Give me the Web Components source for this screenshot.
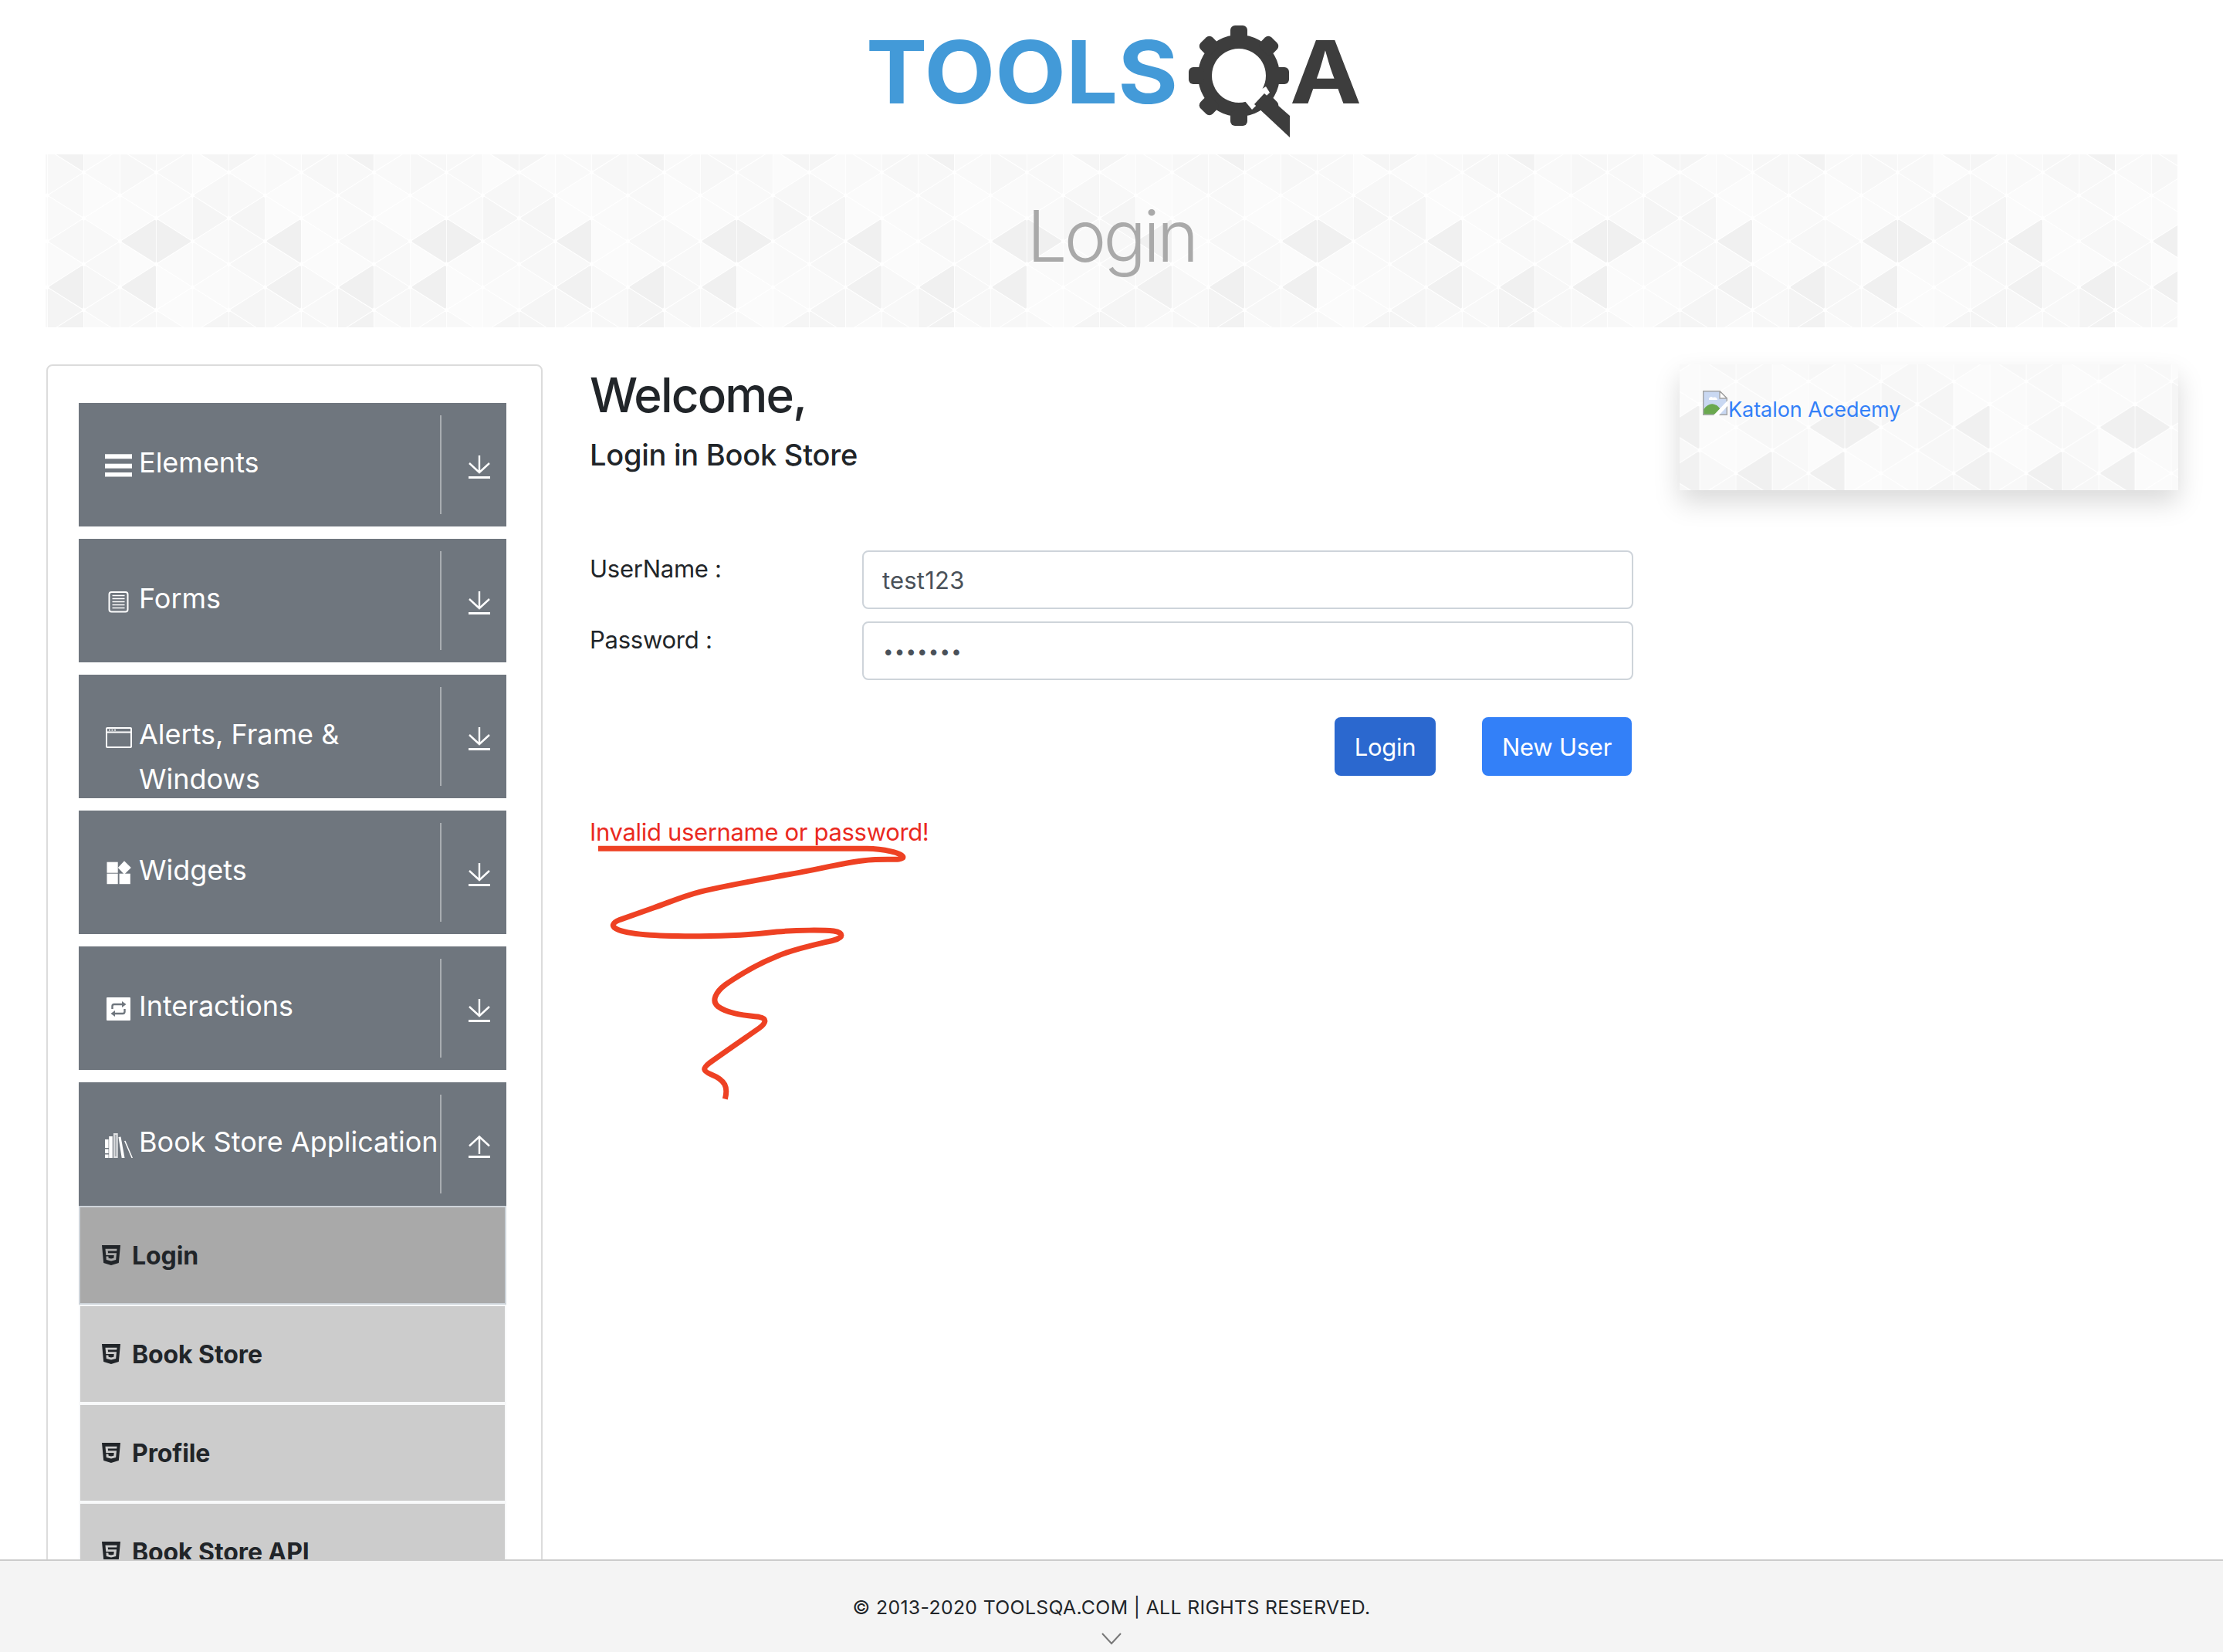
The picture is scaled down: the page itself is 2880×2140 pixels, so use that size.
<!DOCTYPE html>
<html lang="en">
<head>
<meta charset="UTF-8">
<title>ToolsQA</title>
<style>
  html, body { margin: 0; height: 2140px; overflow: hidden; background: #fff; }
  body { font-family: Inter, "Liberation Sans", sans-serif; color: #212529; }
  pattern-box.banner { margin: 0 59px; height: 224px; }
</style>
</head>
<body>
<site-logo></site-logo>
<pattern-box class="banner" shift-x="0" shift-y="0"><page-title>Login</page-title></pattern-box>
<page-columns>
  <side-menu slot="left">
    <menu-group label="Elements" icon="bars"></menu-group>
    <menu-group label="Forms" icon="doc"></menu-group>
    <menu-group label="Alerts, Frame &amp; Windows" icon="window"></menu-group>
    <menu-group label="Widgets" icon="widgets"></menu-group>
    <menu-group label="Interactions" icon="swap"></menu-group>
    <menu-group label="Book Store Application" icon="books" open></menu-group>
    <menu-item active>Login</menu-item>
    <menu-item>Book Store</menu-item>
    <menu-item>Profile</menu-item>
    <menu-item>Book Store API</menu-item>
  </side-menu>
  <login-form slot="center"></login-form>
  <ad-card slot="right"></ad-card>
</page-columns>
<site-footer></site-footer>

<script>
class SiteLogo extends HTMLElement {
  constructor() {
    super();
    this.attachShadow({ mode: 'open' }).innerHTML = `
      <style>
        :host { display: flex; justify-content: center; height: 200px; }
        svg { display: block; }
        text { font-family: Inter, "Liberation Sans", sans-serif; font-weight: 700; }
      </style>
      <svg width="680" height="200" viewBox="1100 0 680 200">
        <text x="1122" y="134" font-size="113" fill="#439ad8" textLength="404" lengthAdjust="spacingAndGlyphs">TOOLS</text>
        <g fill="#3d3d3d">
          <path fill-rule="evenodd" d="M1605 45a53 53 0 1 0 .01 0zM1605 63a35 35 0 1 1-.01 0z"/>
          <rect x="1594" y="33" width="22" height="20" rx="6"/>
          <rect x="1594" y="33" width="22" height="20" rx="6" transform="rotate(45 1605 98)"/>
          <rect x="1594" y="33" width="22" height="20" rx="6" transform="rotate(90 1605 98)"/>
          <rect x="1594" y="33" width="22" height="20" rx="6" transform="rotate(135 1605 98)"/>
          <rect x="1594" y="33" width="22" height="20" rx="6" transform="rotate(180 1605 98)"/>
          <rect x="1594" y="33" width="22" height="20" rx="6" transform="rotate(225 1605 98)"/>
          <rect x="1594" y="33" width="22" height="20" rx="6" transform="rotate(270 1605 98)"/>
          <rect x="1594" y="33" width="22" height="20" rx="6" transform="rotate(315 1605 98)"/>
        </g>
        <path d="M1612 130 L1640 112 L1645 120 L1622 142 Z" fill="#fff"/>
        <path d="M1671 150 L1671 178 L1625 135 L1638 121 Z" fill="#3d3d3d"/>
        <text x="1671" y="134" font-size="113" fill="#3d3d3d" textLength="93" lengthAdjust="spacingAndGlyphs">A</text>
      </svg>`;
  }
}

// triangle wallpaper used behind the title and the ad card
class PatternBox extends HTMLElement {
  constructor() {
    super();
    this.attachShadow({ mode: 'open' });
  }
  connectedCallback() {
    const dark = { 'e1:2:L': '#f0f0f0', 'e1:2:R': '#f0f0f0', 'e1:6:L': '#f0f0f0', 'e2:0:L': '#f0f0f0', 'e2:2:L': '#f0f0f0',
      'e2:6:L': '#f1f1f1', 'o0:3:R': '#f5f5f5', 'o0:5:L': '#f5f5f5', 'o2:7:R': '#f4f4f4', 'o2:5:L': '#f5f5f5',
      'e3:0:L': '#f2f2f2', 'e3:4:L': '#f5f5f5', 'e3:4:R': '#f5f5f5' };
    const soft = ['#f9f9f9', '#f8f8f8', '#fafafa', '#f7f7f7', '#fbfbfb'];
    const colX = k => 49.4 + 47 * k;
    let polys = '';
    for (let k = -1; k <= 8; k++) {
      const odd = ((k % 2) + 2) % 2 === 1;
      const top = odd ? 53 : 23.2;
      for (let n = -1; n <= 4; n++) {
        for (const dir of ['L', 'R']) {
          const y1 = top + 59.5 * n, y2 = y1 + 59.5, x = colX(k), ax = x + (dir === 'L' ? -47 : 47), ay = (y1 + y2) / 2;
          const mk = ((k % 8) + 8) % 8, mn = ((n % 4) + 4) % 4;
          const key = (odd ? 'o' : 'e') + mn + ':' + mk + ':' + dir;
          const fill = dark[key] || soft[(mk * 3 + mn * 7 + (dir === 'L' ? 1 : 4)) % soft.length];
          const cx = (x + x + ax) / 3, cy = (y1 + y2 + ay) / 3, s = 0.88;
          const p = [[x, y1], [x, y2], [ax, ay]].map(q => (cx + (q[0] - cx) * s).toFixed(1) + ',' + (cy + (q[1] - cy) * s).toFixed(1)).join(' ');
          polys += `<polygon points="${p}" fill="${fill}" stroke="${fill}" stroke-width="3" stroke-linejoin="round"/>`;
        }
      }
    }
    const sx = this.getAttribute('shift-x') || 0, sy = this.getAttribute('shift-y') || 0;
    this.shadowRoot.innerHTML = `
      <style>
        :host { display: block; position: relative; overflow: hidden; background: #fff; }
        svg { position: absolute; inset: 0; width: 100%; height: 100%; }
        .content { position: relative; }
      </style>
      <svg><defs><pattern id="tri" width="376" height="238" patternUnits="userSpaceOnUse" patternTransform="translate(${sx} ${sy})">${polys}</pattern></defs>
      <rect width="100%" height="100%" fill="url(#tri)"/></svg>
      <div class="content"><slot></slot></div>`;
  }
}

class PageTitle extends HTMLElement {
  constructor() {
    super();
    this.attachShadow({ mode: 'open' }).innerHTML = `
      <style>
        :host { display: block; text-align: center; height: 224px; }
        h1 { margin: 0; font-size: 92px; font-weight: 300; line-height: 212px; color: #a9a9a9; letter-spacing: -3.700px; }
      </style>
      <h1><slot></slot></h1>`;
  }
}

class PageColumns extends HTMLElement {
  constructor() {
    super();
    this.attachShadow({ mode: 'open' }).innerHTML = `
      <style>
        :host { display: grid; grid-template-columns: 643px 1352px 645px; column-gap: 61px; padding: 48px 59px 0 60px; align-items: start; }
        .right { margin-left: -1px; }
      </style>
      <div><slot name="left"></slot></div>
      <div><slot name="center"></slot></div>
      <div class="right"><slot name="right"></slot></div>`;
  }
}

class SideMenu extends HTMLElement {
  constructor() {
    super();
    this.attachShadow({ mode: 'open' }).innerHTML = `
      <style>
        :host { display: flex; flex-direction: column; box-sizing: border-box; height: 1668px; overflow: hidden; padding: 48px 45px 0 40px; border: 2px solid #dcdcdc; border-radius: 8px; }
        ::slotted(menu-group) { margin-bottom: 16px; }
        ::slotted(menu-group[open]) { margin-bottom: 0; }
      </style>
      <slot></slot>`;
  }
}

const MENU_ICONS = {
  bars: `<rect x="2" y="4.3" width="35" height="6"/><rect x="2" y="16.7" width="35" height="6"/><rect x="2" y="28" width="35" height="5.5"/>`,
  doc: `<rect x="7.5" y="7" width="24" height="25.5" rx="3" fill="none" stroke="#fff" stroke-width="2"/>
        <path d="M11.5 11.5h16M11.5 15.5h16M11.5 19.5h16M11.5 23.5h16M11.5 27.5h16" stroke="#fff" stroke-width="1.4"/>`,
  window: `<rect x="4" y="7" width="32" height="25" rx="1" fill="none" stroke="#fff" stroke-width="2"/>
        <path d="M4 12.5h32" stroke="#fff" stroke-width="2"/><path d="M7 9.8h2M10.5 9.8h2M14 9.8h2" stroke="#fff" stroke-width="1.6"/>`,
  widgets: `<rect x="4.5" y="4.7" width="14.2" height="14"/><rect x="4.5" y="19.7" width="14.2" height="13.5"/><rect x="20.6" y="19.7" width="14.2" height="13.5"/><path d="M27 3.2l8.8 8.8-8.8 8.8-8.2-8.8z"/>`,
  swap: `<rect x="4" y="4" width="31" height="30" rx="1"/>
        <g fill="none" stroke="#6f767e" stroke-width="2.4"><path d="M11.5 19v-3.5a2.5 2.5 0 0 1 2.5-2.5h11"/><path d="M27.5 19v3.5a2.5 2.5 0 0 1-2.5 2.5H14"/></g>
        <path d="M24 9l5.5 4-5.5 4zM15 21l-5.5 4 5.5 4z" fill="#6f767e"/>`,
  books: `<path d="M2 12h4.600v11H2zM2 24.500h4.600V30H2zM2 31.500h4.600V36H2z"/><path d="M7.200 8h4.600v28H7.200z"/>
        <path d="M13 4h5.700v32H13z" opacity=".8"/><path d="M14.800 6h2v28h-2z" fill="#6f767e" opacity=".5"/>
        <path d="M19.500 9l3-.5 5 27.500h-3.800z"/><path d="M27 14l1.500-.3L38 36h-1.600z"/>`
};

class MenuGroup extends HTMLElement {
  constructor() {
    super();
    this.attachShadow({ mode: 'open' });
  }
  connectedCallback() {
    const open = this.hasAttribute('open');
    const arrow = open
      ? `<path d="M15 2.500V25M2 14.500L15 2.500l13 12" fill="none" stroke="#fff" stroke-width="2.400"/>`
      : `<path d="M15 0v21M2 10l13 12 13-12" fill="none" stroke="#fff" stroke-width="2.400"/>`;
    this.shadowRoot.innerHTML = `
      <style>
        :host { display: flex; height: 160px; flex: none; overflow: hidden; background: #6f767e; color: #fff; }
        .icon { width: 46px; margin-left: 32px; padding-top: 62px; flex: none; }
        .icon svg { display: block; fill: #fff; }
        .label { width: 390px; flex: none; padding-top: 48px; font-size: 36px; line-height: 58px; }
        .divider { width: 2px; flex: none; height: 128px; margin-top: 16px; background: #a9adb1; }
        .arrow { margin: 68px 0 0 34px; }
        .arrow svg { display: block; }
      </style>
      <div class="icon"><svg width="40" height="40" viewBox="0 0 40 40">${MENU_ICONS[this.getAttribute('icon')]}</svg></div>
      <div class="label">${this.getAttribute('label').replace('&', '&amp;')}</div>
      <div class="divider"></div>
      <div class="arrow"><svg width="30" height="32" viewBox="0 0 30 32">${arrow}<rect x="1" y="27" width="28" height="3" fill="#fff"/></svg></div>`;
  }
}

class MenuItem extends HTMLElement {
  constructor() {
    super();
    this.attachShadow({ mode: 'open' }).innerHTML = `
      <style>
        :host { display: flex; box-sizing: border-box; height: 128px; flex: none; padding: 43px 0 0 28px; border: 2px solid #f8f9fa; background: #cccccc; color: #212529;
          font-size: 32px; font-weight: 700; line-height: 40px; letter-spacing: -.1px; }
        :host([active]) { background: #a9a9a9; border-color: #ced4da; }
        svg { display: block; margin: 6px 15px 0 0; width: 24px; height: 26px; flex: none; }
      </style>
      <svg viewBox="0 32 384 448" preserveAspectRatio="none"><path fill="#212529" d="M0 32l34.900 395.800L191.500 480l157.600-52.200L384 32H0zm308.200 127.900H124.400l4.100 49.400h175.600l-13.600 148.400-97.900 27v.3h-1.100l-98.700-27.300-6-75.800h47.700L138 320l53.500 14.500 53.700-14.500 6-62.200H84.300L71.500 112.200h241.100l-4.400 47.700z"/></svg>
      <slot></slot>`;
  }
}

class FormRow extends HTMLElement {
  constructor() {
    super();
    this.attachShadow({ mode: 'open' }).innerHTML = `
      <style>
        :host { display: grid; grid-template-columns: 353px 999px; margin-bottom: 16px; }
        label { font-size: 31px; line-height: 48px; letter-spacing: -.25px; }
        input { box-sizing: border-box; width: 100%; height: 76px; padding: 0 24px; border: 2px solid #ced4da; border-radius: 8px;
          font: 31px Inter, "Liberation Sans", sans-serif; letter-spacing: .2px; color: #4a5159; background: #fff; outline: none; }
        :host([type=password]) input { padding-left: 25px; font-size: 24px; letter-spacing: 1.200px; }
      </style>
      <label><slot></slot></label>
      <input>`;
  }
  connectedCallback() {
    const input = this.shadowRoot.querySelector('input');
    input.type = this.getAttribute('type') || 'text';
    input.value = this.getAttribute('value') || '';
  }
}

class BlueButton extends HTMLElement {
  constructor() {
    super();
    this.attachShadow({ mode: 'open' }).innerHTML = `
      <style>
        :host { display: block; }
        button { display: block; width: 194px; height: 76px; padding: 0; border: 0; border-radius: 8px; background: #3380f8; color: #fff;
          font: 31px Inter, "Liberation Sans", sans-serif; letter-spacing: -.25px; }
        :host([dark]) button { width: 131px; background: #2b68cf; }
      </style>
      <button><slot></slot></button>`;
  }
}

class LoginForm extends HTMLElement {
  constructor() {
    super();
    this.attachShadow({ mode: 'open' }).innerHTML = `
      <style>
        :host { display: block; position: relative; }
        h2 { margin: 2px 0 0; font-size: 62px; font-weight: 500; line-height: 76px; letter-spacing: -1.800px; }
        h5 { margin: 15px 0 0; font-size: 38px; font-weight: 500; line-height: 48px; letter-spacing: -.25px; }
        .rows { margin-top: 100px; }
        .actions { display: flex; justify-content: flex-end; gap: 60px; margin: 48px 2px 0 0; }
        .error { margin-top: 49px; font-size: 31px; line-height: 48px; color: #ea2a1f; letter-spacing: -.33px; }
        .scribble { position: absolute; left: -24px; top: 568px; }
      </style>
      <h2>Welcome,</h2>
      <h5>Login in Book Store</h5>
      <div class="rows">
        <form-row value="test123">UserName :</form-row>
        <form-row type="password" value="test123">Password :</form-row>
      </div>
      <div class="actions">
        <blue-button dark>Login</blue-button>
        <blue-button>New User</blue-button>
      </div>
      <div class="error">Invalid username or password!</div>
      <svg class="scribble" width="480" height="420" viewBox="0 0 1440 1260">
        <path fill="none" stroke="#ee4123" stroke-width="21" stroke-linejoin="round" d="M105 172 L1150 172 C1210 172 1290 190 1290 205 C1290 218 1240 212 1170 215 C1080 220 1000 245 900 262 C750 290 600 315 500 340 C430 358 370 385 320 402 C270 420 220 437 190 448 C160 460 150 475 185 488 C240 508 350 512 500 512 C620 512 720 505 800 495 C880 488 980 488 1020 492 C1060 498 1060 518 1020 528 C950 545 870 560 800 590 C720 622 650 665 600 700 C560 730 545 765 570 785 C610 815 680 820 730 826 C765 832 755 852 730 870 C680 905 600 960 540 1003 C510 1027 510 1035 545 1050 C600 1072 610 1100 598 1145"/>
      </svg>`;
  }
}

class AdCard extends HTMLElement {
  constructor() {
    super();
    this.attachShadow({ mode: 'open' }).innerHTML = `
      <style>
        :host { display: block; box-shadow: 0 16px 32px rgba(0,0,0,.15); }
        pattern-box { height: 163px; }
        a { display: block; padding: 34px 0 0 30px; font-size: 27px; line-height: 40px; color: #3380f8; letter-spacing: -.05px; text-decoration: none; }
        svg { vertical-align: 2px; margin-right: 1px; }
      </style>
      <pattern-box shift-x="70.600" shift-y="-31">
        <a href="#"><svg width="32" height="32" viewBox="0 0 32 32">
          <path d="M.7.700H22L31.300 10v21.300H.7z" fill="#c9d8f2" stroke="#a3a3a3" stroke-width="1.400"/>
          <path d="M22 .700V10h9.300z" fill="#fff" stroke="#a3a3a3" stroke-width="1.400"/>
          <path d="M8 12a3 3 0 0 1 5-3 4 4 0 0 1 6 3z" fill="#fff"/>
          <path d="M1.400 30.600V24c4-6 10-8 14-6 4 1 6 4 7 6l-6 6.600z" fill="#6aa84f"/>
          <path d="M14 32L32 13v7L21 32z" fill="#fff"/>
        </svg>Katalon Acedemy</a>
      </pattern-box>`;
  }
}

class SiteFooter extends HTMLElement {
  constructor() {
    super();
    this.attachShadow({ mode: 'open' }).innerHTML = `
      <style>
        :host { display: block; position: fixed; left: 0; right: 0; bottom: 0; box-sizing: border-box; height: 120px; padding-top: 42px; border-top: 2px solid #cccccc; background: #f4f4f4; text-align: center; }
        span { display: block; font-size: 24.800px; line-height: 36px; letter-spacing: .35px; color: #212529; }
        svg { display: block; margin: 15px auto 0; }
      </style>
      <span>© 2013-2020 TOOLSQA.COM | ALL RIGHTS RESERVED.</span>
      <svg width="26" height="16" viewBox="0 0 26 16"><path d="M1 1l12 13L25 1" fill="none" stroke="#777" stroke-width="2"/></svg>`;
  }
}

customElements.define('site-logo', SiteLogo);
customElements.define('pattern-box', PatternBox);
customElements.define('page-title', PageTitle);
customElements.define('page-columns', PageColumns);
customElements.define('side-menu', SideMenu);
customElements.define('menu-group', MenuGroup);
customElements.define('menu-item', MenuItem);
customElements.define('form-row', FormRow);
customElements.define('blue-button', BlueButton);
customElements.define('login-form', LoginForm);
customElements.define('ad-card', AdCard);
customElements.define('site-footer', SiteFooter);
</script>
</body>
</html>
